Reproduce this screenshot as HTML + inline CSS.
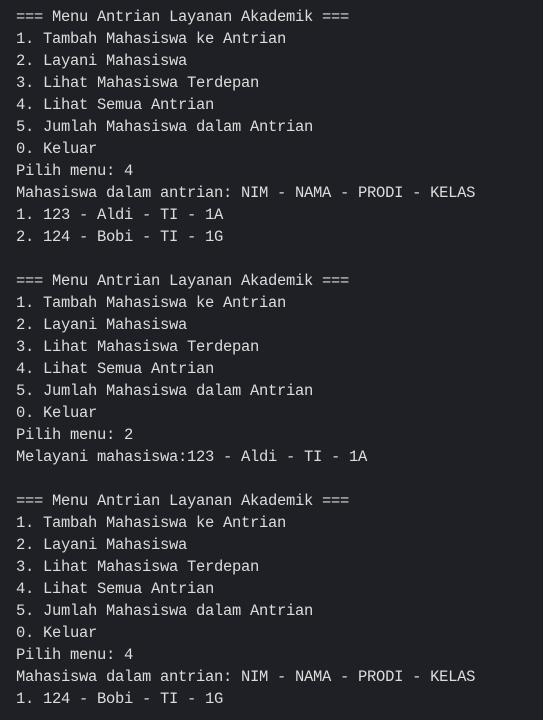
<html><head><style>
body{margin:0;background:#1f2025;width:543px;height:720px;overflow:hidden}
pre{margin:0;padding:6px 0 0 16px;font-family:"Liberation Mono",monospace;font-size:15.5px;letter-spacing:-0.3px;line-height:22px;color:#dcdcdc}
</style></head><body><pre>=== Menu Antrian Layanan Akademik ===
1. Tambah Mahasiswa ke Antrian
2. Layani Mahasiswa
3. Lihat Mahasiswa Terdepan
4. Lihat Semua Antrian
5. Jumlah Mahasiswa dalam Antrian
0. Keluar
Pilih menu: 4
Mahasiswa dalam antrian: NIM - NAMA - PRODI - KELAS
1. 123 - Aldi - TI - 1A
2. 124 - Bobi - TI - 1G

=== Menu Antrian Layanan Akademik ===
1. Tambah Mahasiswa ke Antrian
2. Layani Mahasiswa
3. Lihat Mahasiswa Terdepan
4. Lihat Semua Antrian
5. Jumlah Mahasiswa dalam Antrian
0. Keluar
Pilih menu: 2
Melayani mahasiswa:123 - Aldi - TI - 1A

=== Menu Antrian Layanan Akademik ===
1. Tambah Mahasiswa ke Antrian
2. Layani Mahasiswa
3. Lihat Mahasiswa Terdepan
4. Lihat Semua Antrian
5. Jumlah Mahasiswa dalam Antrian
0. Keluar
Pilih menu: 4
Mahasiswa dalam antrian: NIM - NAMA - PRODI - KELAS
1. 124 - Bobi - TI - 1G</pre></body></html>
